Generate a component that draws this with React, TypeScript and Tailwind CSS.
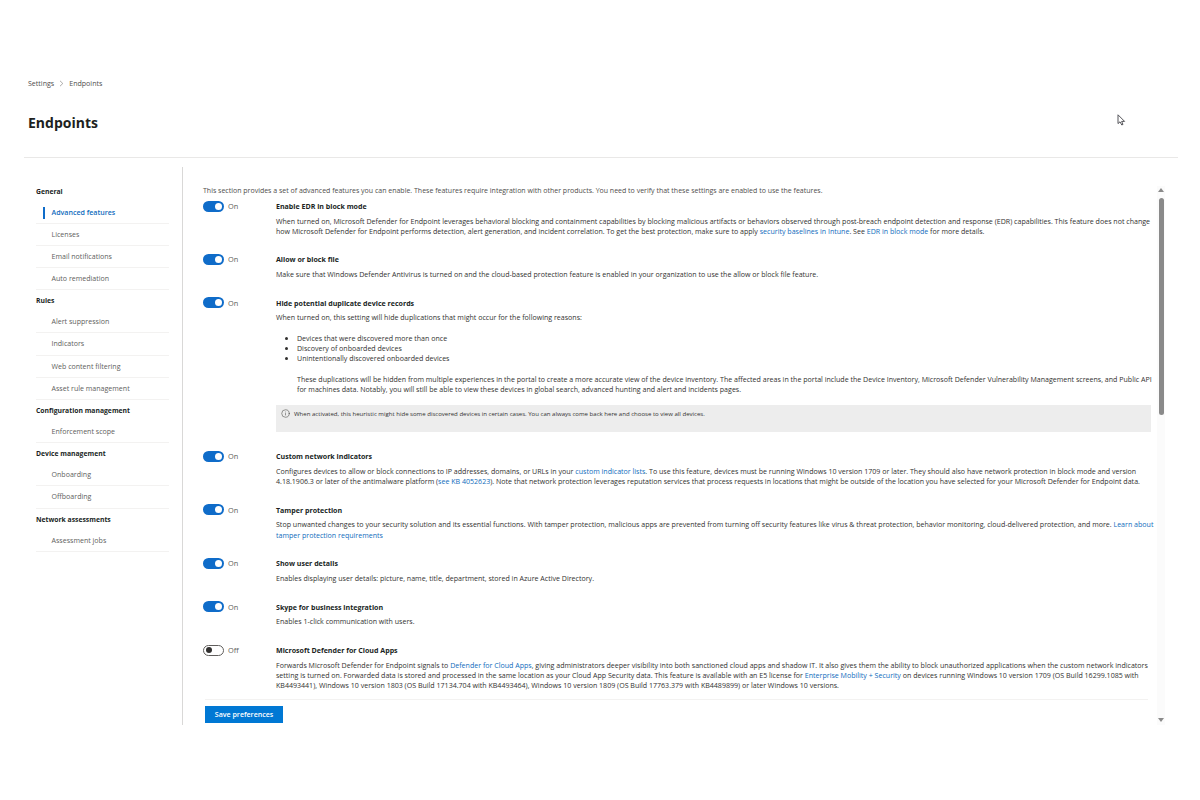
import React from "react";
import { Info } from "lucide-react";

const L = ({ children }: { children: React.ReactNode }) => <span className="text-[#0f6cbd]">{children}</span>;

const Row = ({ on = true, title, children, last = false }: { on?: boolean; title: string; children: React.ReactNode; last?: boolean }) => (
  <div className={`flex ${last ? "h-[55px]" : ""}`}>
    <div className="w-[73px] h-3 flex items-center shrink-0">
      {on ? (
        <div className="w-[21px] h-[11px] rounded-full bg-[#0f6cc9] flex items-center justify-end pr-[2px]">
          <div className="w-[7px] h-[7px] rounded-full bg-white" />
        </div>
      ) : (
        <div className="w-[21px] h-[11px] rounded-full bg-white border border-[#605e5c] flex items-center pl-[2px]">
          <div className="w-[6px] h-[6px] rounded-full bg-[#323130]" />
        </div>
      )}
      <span className="ml-[4px] mt-[1px] text-[7.4px] text-[#605e5c]">{on ? "On" : "Off"}</span>
    </div>
    <div className="flex-1 min-w-0 whitespace-nowrap">
      <div className="h-3 leading-[12px] font-bold text-[#201f1e]">{title}</div>
      <div className="mt-[3.5px] leading-[10.1px] text-[#323130]">{children}</div>
      {!last && <div className="h-[17.8px]" />}
    </div>
  </div>
);

const NavHead = ({ children }: { children: React.ReactNode }) => (
  <div className="h-[21px] leading-[21px] text-[6.8px] font-bold text-[#201f1e]">{children}</div>
);
const NavItem = ({ children, active = false }: { children: React.ReactNode; active?: boolean }) => (
  <div className={`relative h-[22.2px] leading-[21px] pl-[15.5px] border-b border-[#f3f2f1] ${active ? "text-[#0f6cbd] font-semibold" : "text-[#605e5c]"}`}>
    {active && <span className="absolute left-[7px] top-[5px] w-[2px] h-[12px] bg-[#0f6cc9]" />}
    {children}
  </div>
);

export default function App() {
  return (
    <div className="relative w-[1200px] h-[800px] bg-white overflow-hidden text-[7.07px] font-['Open_Sans',sans-serif] text-[#323130]">
      <svg className="absolute left-[1117px] top-[114px]" width="9" height="12" viewBox="0 0 9 12" fill="none">
        <path d="M1 .8V9.6L3 7.8 4.8 11 6 10.4 4.6 7.4H7.6Z" fill="#fff" stroke="#55555a" strokeWidth="1" />
      </svg>

      <div className="pt-[78px] pl-[28px] h-[157px]">
        <div className="h-[10px] flex items-center text-[#4f4e4c]">
          Settings
          <svg className="mx-[5px]" width="5" height="7" viewBox="0 0 5 7" fill="none">
            <path d="M1 .8 3.8 3.5 1 6.2" stroke="#8a8886" strokeWidth=".7" />
          </svg>
          Endpoints
        </div>
        <h1 className="mt-[25px] text-[14px] leading-[20px] font-bold text-[#201f1e]">Endpoints</h1>
      </div>

      <div className="ml-[24px] w-[1154px] border-t border-[#e9e8e7]" />

      <div className="flex mt-[9px] pl-[36px] h-[558px]">
        <nav className="w-[133px] pt-[13.5px] shrink-0">
          <NavHead>General</NavHead>
          <NavItem active>Advanced features</NavItem>
          <NavItem>Licenses</NavItem>
          <NavItem>Email notifications</NavItem>
          <NavItem>Auto remediation</NavItem>
          <NavHead>Rules</NavHead>
          <NavItem>Alert suppression</NavItem>
          <NavItem>Indicators</NavItem>
          <NavItem>Web content filtering</NavItem>
          <NavItem>Asset rule management</NavItem>
          <NavHead>Configuration management</NavHead>
          <NavItem>Enforcement scope</NavItem>
          <NavHead>Device management</NavHead>
          <NavItem>Onboarding</NavItem>
          <NavItem>Offboarding</NavItem>
          <NavHead>Network assessments</NavHead>
          <NavItem>Assessment jobs</NavItem>
        </nav>

        <div className="ml-[13px] w-[1px] bg-[#d9d8d7] shrink-0" />

        <main className="ml-[20px] w-[947px] pt-[19px] shrink-0">
          <div className="h-[14px] leading-[10px] text-[7px] text-[#4f4e4c] whitespace-nowrap">
            This section provides a set of advanced features you can enable. These features require integration with other products. You need to verify that these settings are enabled to use the features.
          </div>

          <Row title="Enable EDR in block mode">
            When turned on, Microsoft Defender for Endpoint leverages behavioral blocking and containment capabilities by blocking malicious artifacts or behaviors observed through post-breach endpoint detection and response (EDR) capabilities. This feature does not change
            <br />
            how Microsoft Defender for Endpoint performs detection, alert generation, and incident correlation. To get the best protection, make sure to apply <L>security baselines in Intune</L>. See <L>EDR in block mode</L> for more details.
          </Row>

          <Row title="Allow or block file">
            Make sure that Windows Defender Antivirus is turned on and the cloud-based protection feature is enabled in your organization to use the allow or block file feature.
          </Row>

          <Row title="Hide potential duplicate device records">
            When turned on, this setting will hide duplications that might occur for the following reasons:
            <ul className="mt-[10.5px] pl-[21px] list-disc list-outside">
              <li>Devices that were discovered more than once</li>
              <li>Discovery of onboarded devices</li>
              <li>Unintentionally discovered onboarded devices</li>
            </ul>
            <div className="mt-[10.5px] pl-[21px]">
              These duplications will be hidden from multiple experiences in the portal to create a more accurate view of the device inventory. The affected areas in the portal include the Device Inventory, Microsoft Defender Vulnerability Management screens, and Public API
              <br />
              for machines data. Notably, you will still be able to view these devices in global search, advanced hunting and alert and incidents pages.
            </div>
            <div className="mt-[11px] mb-[.7px] w-[875px] h-[27px] bg-[#ededed] pl-[5px] pt-[4px] flex items-start text-[6.05px] leading-[10px] text-[#323130]">
              <Info size={9} strokeWidth={1.3} className="mt-[.5px] mr-[4px] shrink-0" />
              When activated, this heuristic might hide some discovered devices in certain cases. You can always come back here and choose to view all devices.
            </div>
          </Row>

          <Row title="Custom network indicators">
            Configures devices to allow or block connections to IP addresses, domains, or URLs in your <L>custom indicator lists</L>. To use this feature, devices must be running Windows 10 version 1709 or later. They should also have network protection in block mode and version
            <br />
            4.18.1906.3 or later of the antimalware platform (<L>see KB 4052623</L>). Note that network protection leverages reputation services that process requests in locations that might be outside of the location you have selected for your Microsoft Defender for Endpoint data.
          </Row>

          <Row title="Tamper protection">
            Stop unwanted changes to your security solution and its essential functions. With tamper protection, malicious apps are prevented from turning off security features like virus &amp; threat protection, behavior monitoring, cloud-delivered protection, and more. <L>Learn about</L>
            <br />
            <L>tamper protection requirements</L>
          </Row>

          <Row title="Show user details">
            Enables displaying user details: picture, name, title, department, stored in Azure Active Directory.
          </Row>

          <Row title="Skype for business integration">Enables 1-click communication with users.</Row>

          <Row on={false} title="Microsoft Defender for Cloud Apps" last>
            Forwards Microsoft Defender for Endpoint signals to <L>Defender for Cloud Apps</L>, giving administrators deeper visibility into both sanctioned cloud apps and shadow IT. It also gives them the ability to block unauthorized applications when the custom network indicators
            <br />
            setting is turned on. Forwarded data is stored and processed in the same location as your Cloud App Security data. This feature is available with an E5 license for <L>Enterprise Mobility + Security</L> on devices running Windows 10 version 1709 (OS Build 16299.1085 with
            <br />
            KB4493441), Windows 10 version 1803 (OS Build 17134.704 with KB4493464), Windows 10 version 1809 (OS Build 17763.379 with KB4489899) or later Windows 10 versions.
          </Row>

          <div className="ml-[2px] w-[943px] border-t border-[#f3f2f1]" />
          <button className="mt-[6px] ml-[2px] w-[78px] h-[17px] bg-[#0078d4] text-white font-semibold flex items-center justify-center">
            Save preferences
          </button>
        </main>

        <div className="ml-[7px] w-[8px] mt-[19px] bg-[#fbfbfb] flex flex-col items-center justify-between shrink-0">
          <svg className="mt-[2px]" width="6" height="4" viewBox="0 0 6 4"><path d="M3 0 6 4H0Z" fill="#8a8a8a" /></svg>
          <div className="absolute left-[1159px] top-[198px] w-[5px] h-[217px] rounded-full bg-[#8a8a8a]" />
          <svg className="mb-[3px]" width="6" height="4" viewBox="0 0 6 4"><path d="M3 4 6 0H0Z" fill="#8a8a8a" /></svg>
        </div>
      </div>
    </div>
  );
}
